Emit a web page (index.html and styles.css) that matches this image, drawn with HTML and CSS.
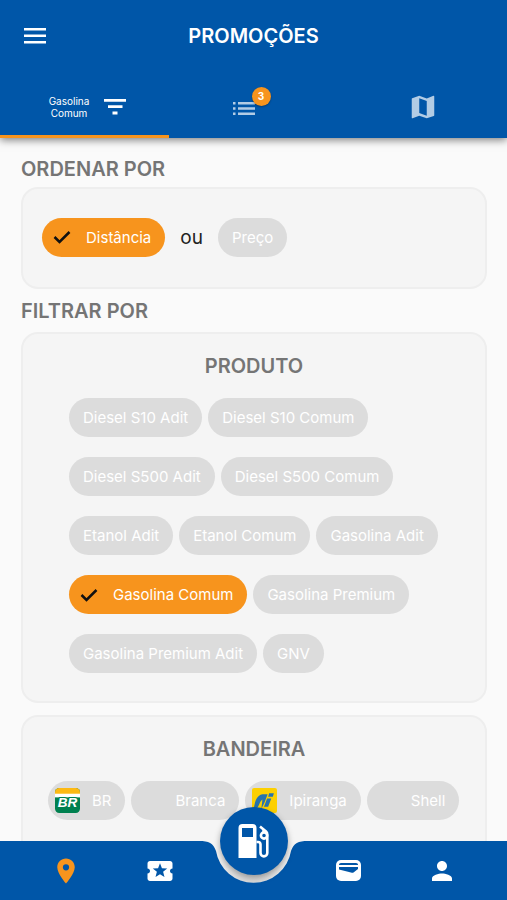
FILE: index.html
```html
<!DOCTYPE html>
<html lang="pt-BR">
<head>
<meta charset="utf-8">
<meta name="viewport" content="width=device-width, initial-scale=1">
<title>Promoções</title>
<link rel="stylesheet" href="styles.css">
</head>
<body>
<header class="header">
  <div class="topbar">
    <button class="icon-button menu" type="button" aria-label="Menu">
      <svg width="22" height="16" viewBox="0 0 22 16"><path d="M0 0h22v2.500H0zM0 6.500h22V9H0zM0 13h22v2.500H0z" fill="#fff"/></svg>
    </button>
    <h1 class="title">PROMOÇÕES</h1>
  </div>
  <nav class="tabs">
    <button class="tab active" type="button">
      <span class="tab-label">Gasolina<br>Comum</span>
      <svg width="22" height="16" viewBox="0 0 22 16"><path d="M0 0h22v2.800H0zM4 6.300h14.500v2.800H4zM8.500 12.600h5v2.800h-5z" fill="#fff"/></svg>
    </button>
    <button class="tab" type="button" aria-label="Lista">
      <span class="badge-anchor">
        <svg width="22" height="14" viewBox="0 0 22 14"><path d="M0 0h2.500v2.500H0zM5 0h17v2.500H5zM0 5.200h2.500v2.500H0zM5 5.200h17v2.500H5zM0 10.400h2.500v2.500H0zM5 10.400h17v2.500H5z" fill="#b2cce5"/></svg>
        <span class="badge">3</span>
      </span>
    </button>
    <button class="tab" type="button" aria-label="Mapa">
      <svg width="30" height="30" viewBox="0 0 24 24"><path d="M20.5 3l-.16.03L15 5.100 9 3 3.360 4.900c-.21.07-.36.25-.36.48V20.500c0 .28.22.5.5.5l.16-.03L9 18.900l6 2.100 5.640-1.900c.21-.07.36-.25.36-.48V3.500c0-.28-.22-.5-.5-.5zM15 19l-6-2.110V5l6 2.110V19z" fill="#b2cce5"/></svg>
    </button>
  </nav>
</header>
<main class="content">
  <h2 class="section-title">ORDENAR POR</h2>
  <section class="panel sort">
    <button class="chip selected" type="button"><svg class="check" width="24" height="24" viewBox="0 0 24 24"><path d="M4.500 12l5 5L19.500 7" fill="none" stroke="#111" stroke-width="2.500"/></svg>Distância</button>
    <span class="or">ou</span>
    <button class="chip" type="button">Preço</button>
  </section>
  <h2 class="section-title">FILTRAR POR</h2>
  <section class="panel product">
    <h3 class="panel-title">PRODUTO</h3>
    <div class="chips">
      <button class="chip" type="button">Diesel S10 Adit</button>
      <button class="chip" type="button">Diesel S10 Comum</button>
      <button class="chip" type="button">Diesel S500 Adit</button>
      <button class="chip" type="button">Diesel S500 Comum</button>
      <button class="chip" type="button">Etanol Adit</button>
      <button class="chip" type="button">Etanol Comum</button>
      <button class="chip" type="button">Gasolina Adit</button>
      <button class="chip selected" type="button"><svg class="check" width="24" height="24" viewBox="0 0 24 24"><path d="M4.500 12l5 5L19.500 7" fill="none" stroke="#111" stroke-width="2.500"/></svg>Gasolina Comum</button>
      <button class="chip" type="button">Gasolina Premium</button>
      <button class="chip" type="button">Gasolina Premium Adit</button>
      <button class="chip" type="button">GNV</button>
    </div>
  </section>
  <section class="panel brand">
    <h3 class="panel-title">BANDEIRA</h3>
    <div class="chips brands">
      <button class="chip with-logo" type="button"><svg class="logo" viewBox="0 0 24 24"><rect width="24" height="24" rx="4" fill="#00804f"/><path d="M0 6V4a4 4 0 0 1 4-4h16a4 4 0 0 1 4 4v2z" fill="#fdb913"/><path d="M0 5.500h24V9H0z" fill="#fff"/><text x="12" y="18" text-anchor="middle" class="br-text">BR</text></svg>BR</button>
      <button class="chip with-logo" type="button"><span class="logo"></span>Branca</button>
      <button class="chip with-logo" type="button"><svg class="logo" viewBox="0 0 24 24"><rect width="24" height="24" rx="2" fill="#fdd000"/><path d="M10 6h5l-3 8-3 6 1-9c-3 2-3 7-6 9H3c-1 0-1-1-1-2 1-6 3-11 8-12z" fill="#2673ae"/><path d="M14.500 10h4l-3 8h-4zM16.500 5H21l-1 3.500h-4.500z" fill="#2673ae"/></svg>Ipiranga</button>
      <button class="chip with-logo" type="button"><span class="logo"></span>Shell</button>
    </div>
  </section>
</main>
<nav class="bottom">
  <div class="bar">
    <span class="bar-side"></span>
    <svg class="notch" width="109" height="59" viewBox="0 0 109 59"><defs><linearGradient id="rim" x1="0" y1="0" x2="0" y2="1"><stop offset="0" stop-color="#f0f0f0" stop-opacity="0"/><stop offset="1" stop-color="#d8d8d8"/></linearGradient></defs><path d="M17 10A38 38 0 0 0 92 10z" fill="url(#rim)"/><path d="M0 0C10 0 14 2 17 10A38 38 0 0 0 92 10C95 2 99 0 109 0V59H0z" fill="#0056a8"/></svg>
    <span class="bar-side"></span>
  </div>
  <div class="items">
    <a class="item" href="#local" aria-label="Postos"><svg width="30" height="30" viewBox="0 0 24 24"><path d="M12 2C8.130 2 5 5.130 5 9c0 5.250 7 13 7 13s7-7.750 7-13c0-3.870-3.130-7-7-7zm0 9.500a2.500 2.500 0 1 1 0-5 2.500 2.500 0 0 1 0 5z" fill="#f7941d"/></svg></a>
    <a class="item" href="#cupons" aria-label="Cupons"><svg width="30" height="30" viewBox="0 0 24 24"><path d="M20 12c0-1.100.9-2 2-2V6c0-1.100-.9-2-2-2H4c-1.100 0-1.990.9-1.990 2v4c1.100 0 1.990.9 1.990 2s-.89 2-2 2v4c0 1.100.9 2 2 2h16c1.100 0 2-.9 2-2v-4c-1.100 0-2-.9-2-2zm-4.420 4.800L12 14.500l-3.580 2.300 1.080-4.120-3.290-2.690 4.240-.25L12 5.800l1.540 3.950 4.240.25-3.290 2.690 1.090 4.110z" fill="#fff"/></svg></a>
    <a class="item fab" href="#abastecer" aria-label="Abastecer"><svg width="32" height="34" viewBox="0 0 32 34"><path fill-rule="evenodd" d="M4.500 0h10a4 4 0 0 1 4 4v30H.5V4a4 4 0 0 1 4-4zM4 4v9h11V4z" fill="#fff"/><path d="M18.500 18h1.500a2.500 2.500 0 0 1 2.500 2.500V29a3.400 3.400 0 0 0 6.800 0V10.500c0-1.500-.5-2.300-1.300-3.100L22 2.500" fill="none" stroke="#fff" stroke-width="2.600"/><path d="M25.500 5v4" stroke="#fff" stroke-width="2.400"/><circle cx="26" cy="11.500" r="3.100" fill="none" stroke="#fff" stroke-width="2.600"/></svg></a>
    <a class="item" href="#carteira" aria-label="Carteira"><svg width="25" height="21" viewBox="0 0 25 21"><rect width="25" height="21" rx="5" fill="#fff"/><path d="M3 4.500Q3 3 5 3h15q2 0 2 1.500v.5H3zM3 7h19v2l-4.500 3.500q-1 .5-2.500 0L3 9.500z" fill="#0056a8"/></svg></a>
    <a class="item" href="#perfil" aria-label="Perfil"><svg width="30" height="30" viewBox="0 0 24 24"><path d="M12 12c2.210 0 4-1.790 4-4s-1.790-4-4-4-4 1.790-4 4 1.790 4 4 4zm0 2c-2.670 0-8 1.340-8 4v2h16v-2c0-2.660-5.330-4-8-4z" fill="#fff"/></svg></a>
  </div>
</nav>
</body>
</html>
```
FILE: styles.css
```css
* { box-sizing: border-box; }
body { margin: 0; height: 100vh; display: flex; flex-direction: column; overflow: hidden; background: #fafafa; font-family: Inter, sans-serif; color: #757575; }
button { border: 0; padding: 0; background: none; font: inherit; color: inherit; }
svg { display: block; flex: none; }
h1, h2, h3 { margin: 0; font-weight: 600; font-size: 20px; line-height: 24px; }
.header { flex: none; background: #0056a8; color: #fff; box-shadow: 0 2px 8px rgba(0,0,0,.5); z-index: 1; }
.topbar { display: grid; grid-template-columns: 1fr auto 1fr; align-items: center; height: 77px; padding: 0 24px 6px; }
.tabs { display: grid; grid-template-columns: repeat(3, 1fr); height: 61px; }
.tab { display: flex; align-items: center; justify-content: center; gap: 15px; padding-top: 2px; border-bottom: 3px solid transparent; }
.tab.active { border-color: #f7941d; padding-left: 6px; }
.tab-label { font-size: 10px; line-height: 12px; }
.badge-anchor { position: relative; padding-top: 4px; margin-right: 20px; }
.badge { position: absolute; left: 19px; top: -11px; width: 19px; height: 19px; border-radius: 50%; background: #f7941d; box-shadow: 0 1px 2px rgba(0,0,0,.3); font-size: 10px; font-weight: 700; line-height: 19px; }
.content { flex: 1; min-height: 0; overflow: hidden; padding: 19px 20px 0 21px; }
.panel { border: 2px solid #eee; border-radius: 17px; background: #f5f5f5; }
.section-title { padding-bottom: 6px; }
.sort { display: flex; align-items: center; height: 102px; padding: 0 19px 2px; margin-bottom: 10px; }
.or { margin: 0 15px; font-size: 19px; color: #222; }
.chip { display: inline-flex; align-items: center; height: 39px; padding: 0 14px; border-radius: 20px; background: #dcdcdc; color: #fff; font-size: 15px; white-space: nowrap; }
.chip.selected { background: #f7941d; padding-left: 8px; }
.check { margin-right: 12px; }
.product { padding: 20px 24px 28px 46px; margin: 3px 0 12px; }
.panel-title { text-align: center; }
.product .panel-title { margin-right: 22px; }
.chips { display: flex; flex-wrap: wrap; gap: 20px 6px; margin-top: 20px; }
.brand { padding: 20px 25px 120px; }
.brands { flex-wrap: nowrap; }
.with-logo { padding-left: 7px; }
.logo { width: 25px; height: 25px; margin-right: 12px; flex: none; }
.br-text { font: italic 700 13px "Liberation Sans", sans-serif; fill: #fff; stroke: #00804f; stroke-width: 2px; paint-order: stroke; }
.bottom { position: fixed; left: 0; right: 0; bottom: 0; height: 59px; z-index: 2; }
.bar { position: absolute; inset: 0; display: flex; }
.bar-side { flex: 1; background: #0056a8; }
.items { position: relative; height: 100%; display: grid; grid-template-columns: repeat(5, 1fr); padding: 0 18px 0 19px; }
.item { display: flex; align-items: center; justify-content: center; }
.fab { width: 68px; height: 68px; margin-top: -34px; justify-self: center; border-radius: 50%; background: #0056a8; box-shadow: 0 3px 6px rgba(0,0,0,.35); }
```
